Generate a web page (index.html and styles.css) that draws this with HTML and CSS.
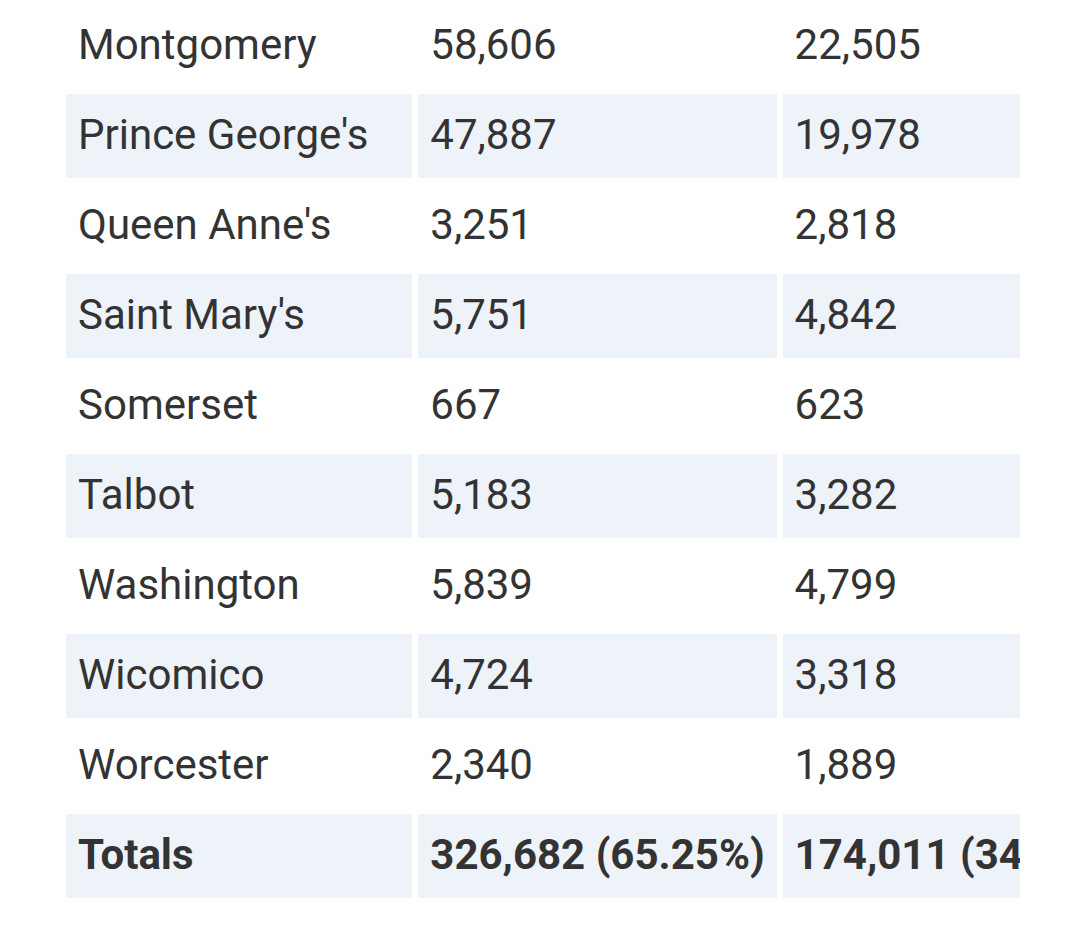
FILE: index.html
```html
<!DOCTYPE html>
<html lang="en">
<head>
<meta charset="utf-8">
<title>Results</title>
<link rel="stylesheet" href="styles.css">
</head>
<body>
<div class="table-wrap">
  <table class="results">
    <colgroup>
      <col class="c-county">
      <col class="c-a">
      <col class="c-b">
    </colgroup>
    <tbody>
      <tr><td>Montgomery</td><td>58,606</td><td>22,505</td></tr>
      <tr><td>Prince George's</td><td>47,887</td><td>19,978</td></tr>
      <tr><td>Queen Anne's</td><td>3,251</td><td>2,818</td></tr>
      <tr><td>Saint Mary's</td><td>5,751</td><td>4,842</td></tr>
      <tr><td>Somerset</td><td>667</td><td>623</td></tr>
      <tr><td>Talbot</td><td>5,183</td><td>3,282</td></tr>
      <tr><td>Washington</td><td>5,839</td><td>4,799</td></tr>
      <tr><td>Wicomico</td><td>4,724</td><td>3,318</td></tr>
      <tr><td>Worcester</td><td>2,340</td><td>1,889</td></tr>
      <tr class="totals"><td>Totals</td><td>326,682 (65.25%)</td><td>174,011 (34.75%)</td></tr>
    </tbody>
  </table>
</div>
</body>
</html>
```
FILE: styles.css
```css
html, body {
  margin: 0;
  padding: 0;
  background: #ffffff;
}

body {
  font-family: Roboto, "Liberation Sans", Arial, sans-serif;
  color: #333333;
}

.table-wrap {
  width: 960px;
  margin-left: 60px;
  margin-top: -2px;
  overflow: hidden;
}

.results {
  border-collapse: separate;
  border-spacing: 6px;
  table-layout: fixed;
  width: 1100px;
  font-size: 42px;
}

.c-county { width: 345px; }
.c-a { width: 357px; }
.c-b { width: 370px; }

.results td {
  height: 84px;
  padding: 0 12px 3px 12px;
  box-sizing: border-box;
  line-height: 63px;
  white-space: nowrap;
  vertical-align: middle;
  text-align: left;
  overflow: hidden;
}

.results tr:nth-child(even) td {
  background: #eef2f9;
}

.results .totals td {
  font-weight: 700;
}
```
